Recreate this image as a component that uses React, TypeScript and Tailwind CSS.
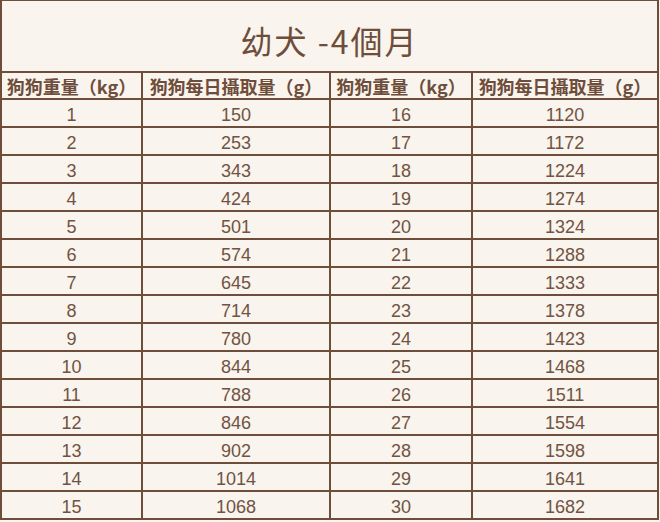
const rows: [number, number, number, number][] = [
  [1, 150, 16, 1120],
  [2, 253, 17, 1172],
  [3, 343, 18, 1224],
  [4, 424, 19, 1274],
  [5, 501, 20, 1324],
  [6, 574, 21, 1288],
  [7, 645, 22, 1333],
  [8, 714, 23, 1378],
  [9, 780, 24, 1423],
  [10, 844, 25, 1468],
  [11, 788, 26, 1511],
  [12, 846, 27, 1554],
  [13, 902, 28, 1598],
  [14, 1014, 29, 1641],
  [15, 1068, 30, 1682],
];

const headers = ["狗狗重量（kg）", "狗狗每日攝取量（g）", "狗狗重量（kg）", "狗狗每日攝取量（g）"];

const cjk = { fontFamily: '"Noto Sans CJK TC", "Noto Sans", sans-serif' };
const num = { fontFamily: '"Liberation Sans", Arial, sans-serif' };

export default function App() {
  return (
    <div className="w-[660px] h-[522px] bg-[#f9f4ed]">
      <div className="w-[659px] border-2 border-t border-[#6e4d3b] bg-[#f9f4ed] text-[#6e4d3b]">
        <div
          className="h-[72px] border-b-2 border-[#6e4d3b] flex items-center justify-center pt-[8px] text-[32px] font-normal tracking-[2px]"
          style={cjk}
        >
          幼犬 -4個月
        </div>
        <div className="grid grid-cols-[141px_188px_142px_184px]">
          {headers.map((h, i) => (
            <div
              key={i}
              className={`h-[27px] border-b-2 border-[#6e4d3b] flex items-center justify-center pt-[2px] text-[18px] font-bold whitespace-nowrap overflow-hidden ${i < 3 ? "border-r-2" : ""}`}
              style={cjk}
            >
              {h}
            </div>
          ))}
          {rows.map((r, ri) =>
            r.map((v, ci) => (
              <div
                key={`${ri}-${ci}`}
                className={`flex items-center justify-center pt-[5px] text-[18px] text-[#715343] border-[#6e4d3b] ${ri < rows.length - 1 ? "h-[28px] border-b-2" : "h-[26px]"} ${ci < 3 ? "border-r-2" : ""}`}
                style={num}
              >
                {v}
              </div>
            ))
          )}
        </div>
      </div>
    </div>
  );
}
